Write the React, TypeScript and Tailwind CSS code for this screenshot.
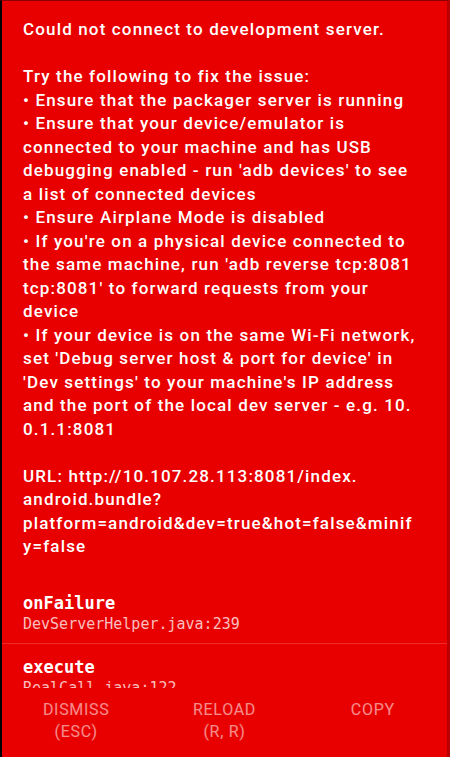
import React from 'react';

const messageLines: string[] = [
  'Could not connect to development server.',
  '',
  'Try the following to fix the issue:',
  '• Ensure that the packager server is running',
  '• Ensure that your device/emulator is',
  'connected to your machine and has USB',
  "debugging enabled - run 'adb devices' to see",
  'a list of connected devices',
  '• Ensure Airplane Mode is disabled',
  "• If you're on a physical device connected to",
  "the same machine, run 'adb reverse tcp:8081",
  "tcp:8081' to forward requests from your",
  'device',
  '• If your device is on the same Wi-Fi network,',
  "set 'Debug server host & port for device' in",
  "'Dev settings' to your machine's IP address",
  'and the port of the local dev server - e.g. 10.',
  '0.1.1:8081',
  '',
  'URL: http://10.107.28.113:8081/index.',
  'android.bundle?',
  'platform=android&dev=true&hot=false&minif',
  'y=false',
];

type Frame = {
  method: string;
  file: string;
};

const frames: Frame[] = [
  { method: 'onFailure', file: 'DevServerHelper.java:239' },
  { method: 'execute', file: 'RealCall.java:122' },
];

const buttons = [
  { label: 'DISMISS', hint: '(ESC)' },
  { label: 'RELOAD', hint: '(R, R)' },
  { label: 'COPY', hint: '' },
];

export default function App() {
  return (
    <div className="w-[450px] h-[757px] flex flex-col bg-[#e80000] border-l-2 border-l-black border-t border-t-[#8a0000] border-r-[3px] border-r-[#b80000] font-['Roboto',sans-serif] text-white overflow-hidden">
      <div className="h-[687px] overflow-hidden pt-[17px]">
        <div className="px-[21px] text-[17px] leading-[23.5px] font-medium tracking-[1.15px]">
          {messageLines.map((line, i) => (
            <div key={i} className="whitespace-nowrap h-[23.5px]">
              {line}
            </div>
          ))}
        </div>
        <div className="mt-[21px] font-['DejaVu_Sans_Mono',monospace]">
          {frames.map((frame) => (
            <div key={frame.method} className="px-[21px] pt-3 pb-[9px] border-b border-b-[#f02a2a]">
              <div className="text-[17px] leading-[22px] font-bold">{frame.method}</div>
              <div className="text-[15px] leading-[20px] text-white/75">{frame.file}</div>
            </div>
          ))}
        </div>
      </div>
      <div className="grid grid-cols-3 pt-[11px] text-[16px] leading-[22px] tracking-[0.7px] text-white/55">
        {buttons.map((b) => (
          <div key={b.label} className="flex flex-col items-center">
            <span>{b.label}</span>
            {b.hint && <span>{b.hint}</span>}
          </div>
        ))}
      </div>
    </div>
  );
}
